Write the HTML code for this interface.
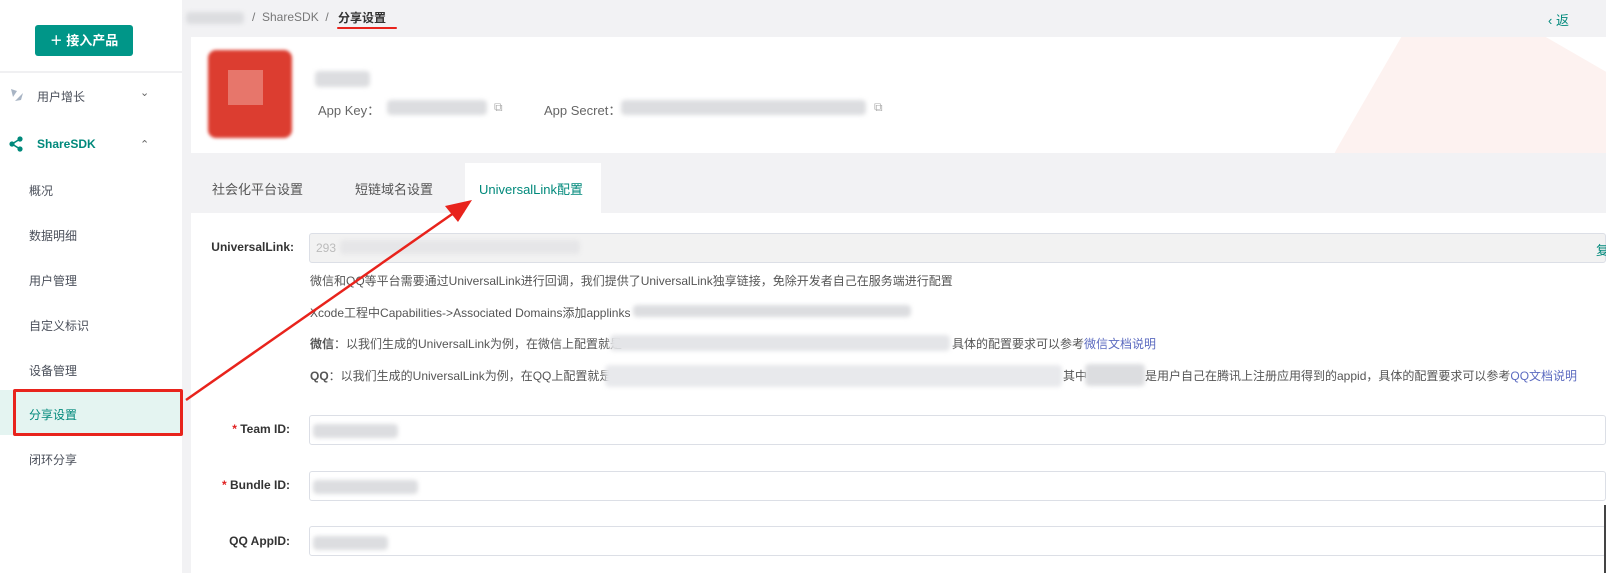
<!DOCTYPE html>
<html><head><meta charset="utf-8"><style>
*{margin:0;padding:0;box-sizing:border-box}
body{width:1606px;height:573px;overflow:hidden;background:#f2f2f4;font-family:"Liberation Sans","Noto Sans CJK SC",sans-serif;font-size:12px;color:#333;position:relative}
.abs{position:absolute}
.side{left:0;top:0;width:182px;height:573px;background:#fff}
.btn{left:35px;top:25px;width:98px;height:31px;background:#009688;border-radius:3px;color:#fff;font-size:13px;text-align:center;line-height:31px;font-weight:bold}
.mi{left:29px;font-size:12px;color:#4a4f5a}
.blur{background:#dcdde0;filter:blur(2px);border-radius:4px}
.inp{left:309px;right:0;height:30px;border:1px solid #dcdfe6;border-radius:3px;background:#fff}
.lbl{font-size:12px;color:#333;font-weight:bold;text-align:right;width:100px}
.txt{left:310px;font-size:12px;color:#555}
.star{color:#e02020}
</style></head><body>
<div class="abs side"></div>
<div class="abs btn">＋ 接入产品</div>
<div class="abs" style="left:0;top:71px;width:182px;height:2px;background:#f0f0f2"></div>
<svg class="abs" style="left:9px;top:87px" width="16" height="16"><path d="M2 2 L8 4 L4 10 Z M6 14 L14 6 L12 13 Z" fill="#a8b4c4"/></svg>
<div class="abs mi" style="left:37px;top:88px;font-size:12px">用户增长</div>
<div class="abs" style="left:140px;top:86px;color:#666;font-size:11px">⌄</div>
<svg class="abs" style="left:8px;top:136px" width="16" height="16"><circle cx="12" cy="3" r="2.6" fill="#00897b"/><circle cx="12" cy="13" r="2.6" fill="#00897b"/><circle cx="4" cy="8" r="2.6" fill="#00897b"/><path d="M12 3L4 8L12 13" stroke="#00897b" stroke-width="1.6" fill="none"/></svg>
<div class="abs" style="left:37px;top:137px;color:#00897b;font-weight:bold;font-size:12px">ShareSDK</div>
<div class="abs" style="left:140px;top:138px;color:#666;font-size:11px">⌃</div>
<div class="abs mi" style="top:182px">概况</div>
<div class="abs mi" style="top:227px">数据明细</div>
<div class="abs mi" style="top:272px">用户管理</div>
<div class="abs mi" style="top:317px">自定义标识</div>
<div class="abs mi" style="top:362px">设备管理</div>
<div class="abs" style="left:0;top:390px;width:182px;height:45px;background:#e4f4f1"></div>
<div class="abs" style="left:13px;top:389px;width:170px;height:47px;border:3px solid #e8231c;border-radius:2px"></div>
<div class="abs mi" style="top:406px;color:#00897b">分享设置</div>
<div class="abs mi" style="top:451px">闭环分享</div>

<div class="abs blur" style="left:186px;top:12px;width:58px;height:12px"></div>
<div class="abs" style="left:252px;top:10px;color:#777">/ &nbsp;ShareSDK &nbsp;/</div>
<div class="abs" style="left:338px;top:9px;font-weight:bold;color:#333">分享设置</div>
<div class="abs" style="left:337px;top:27px;width:60px;height:2px;background:#e8231c;border-radius:1px"></div>
<div class="abs" style="left:1548px;top:10px;color:#00897b;font-size:13px">‹ 返</div>

<div class="abs" style="left:191px;top:37px;width:1415px;height:116px;background:#fff;overflow:hidden">
<div class="abs" style="left:1160px;top:0px;width:320px;height:260px;background:#fdf2f0;border-radius:60px;transform:rotate(30deg)"></div>
</div>
<div class="abs" style="left:208px;top:50px;width:84px;height:88px;background:#dc3d30;border-radius:8px;filter:blur(1.5px)"></div>
<div class="abs" style="left:228px;top:70px;width:35px;height:35px;background:#e7766b"></div>
<div class="abs blur" style="left:315px;top:71px;width:55px;height:16px"></div>
<div class="abs" style="left:318px;top:100px;color:#666;font-size:13px">App Key：</div>
<div class="abs blur" style="left:387px;top:100px;width:100px;height:15px"></div>
<div class="abs" style="left:494px;top:100px;color:#aaa">⧉</div>
<div class="abs" style="left:544px;top:100px;color:#666;font-size:13px">App Secret：</div>
<div class="abs blur" style="left:621px;top:100px;width:245px;height:15px"></div>
<div class="abs" style="left:874px;top:100px;color:#aaa">⧉</div>

<div class="abs" style="left:212px;top:179px;color:#555;font-size:13px">社会化平台设置</div>
<div class="abs" style="left:355px;top:179px;color:#555;font-size:13px">短链域名设置</div>
<div class="abs" style="left:465px;top:163px;width:136px;height:50px;background:#fff"></div>
<div class="abs" style="left:479px;top:179px;color:#00897b;font-size:13px">UniversalLink配置</div>
<div class="abs" style="left:191px;top:213px;width:1415px;height:360px;background:#fff"></div>

<div class="abs lbl" style="left:194px;top:240px">UniversalLink:</div>
<div class="abs inp" style="top:233px;background:#f2f2f2"></div>
<div class="abs" style="left:316px;top:241px;color:#bbb">293</div>
<div class="abs blur" style="left:340px;top:240px;width:240px;height:14px;background:#e6e6e8"></div>
<div class="abs" style="left:1596px;top:240px;color:#00897b;font-size:13px">复</div>
<div class="abs txt" style="top:272px">微信和QQ等平台需要通过UniversalLink进行回调，我们提供了UniversalLink独享链接，免除开发者自己在服务端进行配置</div>
<div class="abs txt" style="top:304px">Xcode工程中Capabilities-&gt;Associated Domains添加applinks</div>
<div class="abs blur" style="left:633px;top:305px;width:278px;height:12px"></div>
<div class="abs txt" style="top:335px"><b>微信</b>：以我们生成的UniversalLink为例，在微信上配置就是</div>
<div class="abs blur" style="left:610px;top:335px;width:340px;height:16px;background:#e4e5e8"></div>
<div class="abs txt" style="left:952px;top:335px">具体的配置要求可以参考<span style="color:#5c6bc0">微信文档说明</span></div>
<div class="abs txt" style="top:367px"><b>QQ</b>：以我们生成的UniversalLink为例，在QQ上配置就是</div>
<div class="abs blur" style="left:605px;top:365px;width:457px;height:22px;background:#e8e9ec"></div>
<div class="abs txt" style="left:1063px;top:367px">其中</div>
<div class="abs blur" style="left:1085px;top:364px;width:60px;height:22px"></div>
<div class="abs txt" style="left:1145px;top:367px">是用户自己在腾讯上注册应用得到的appid，具体的配置要求可以参考<span style="color:#5c6bc0">QQ文档说明</span></div>

<div class="abs lbl" style="left:190px;top:422px"><span class="star">* </span>Team ID:</div>
<div class="abs inp" style="top:415px"></div>
<div class="abs blur" style="left:313px;top:424px;width:85px;height:14px"></div>
<div class="abs lbl" style="left:190px;top:478px"><span class="star">* </span>Bundle ID:</div>
<div class="abs inp" style="top:471px"></div>
<div class="abs blur" style="left:313px;top:480px;width:105px;height:14px"></div>
<div class="abs lbl" style="left:190px;top:534px">QQ AppID:</div>
<div class="abs inp" style="top:526px"></div>
<div class="abs blur" style="left:313px;top:536px;width:75px;height:14px"></div>
<div class="abs" style="left:1604px;top:505px;width:2px;height:68px;background:#444"></div>

<svg class="abs" style="left:0;top:0" width="1606" height="573"><line x1="186" y1="400" x2="458" y2="210" stroke="#e8231c" stroke-width="2.5"/><path d="M472 200 L445 206 L458 222 Z" fill="#e8231c"/></svg>
</body></html>
